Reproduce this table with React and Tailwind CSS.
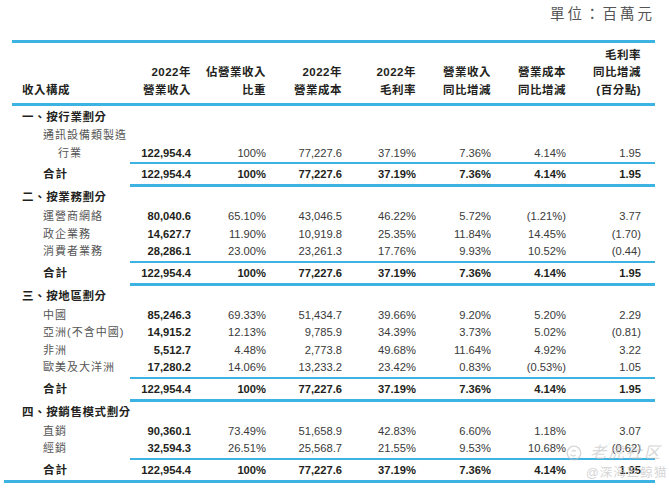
import React from "react";

const COLS = "grid grid-cols-[118px_61px_75px_76px_74px_75px_75px_75px]";

const sections = [
  {
    title: "一、按行業劃分",
    rows: [
      { label: "通訊設備類製造" },
      { label: "行業", indent: true, v: ["122,954.4", "100%", "77,227.6", "37.19%", "7.36%", "4.14%", "1.95"] },
    ],
  },
  {
    title: "二、按業務劃分",
    rows: [
      { label: "運營商網絡", v: ["80,040.6", "65.10%", "43,046.5", "46.22%", "5.72%", "(1.21%)", "3.77"] },
      { label: "政企業務", v: ["14,627.7", "11.90%", "10,919.8", "25.35%", "11.84%", "14.45%", "(1.70)"] },
      { label: "消費者業務", v: ["28,286.1", "23.00%", "23,261.3", "17.76%", "9.93%", "10.52%", "(0.44)"] },
    ],
  },
  {
    title: "三、按地區劃分",
    rows: [
      { label: "中國", v: ["85,246.3", "69.33%", "51,434.7", "39.66%", "9.20%", "5.20%", "2.29"] },
      { label: "亞洲(不含中國)", v: ["14,915.2", "12.13%", "9,785.9", "34.39%", "3.73%", "5.02%", "(0.81)"] },
      { label: "非洲", v: ["5,512.7", "4.48%", "2,773.8", "49.68%", "11.64%", "4.92%", "3.22"] },
      { label: "歐美及大洋洲", v: ["17,280.2", "14.06%", "13,233.2", "23.42%", "0.83%", "(0.53%)", "1.05"] },
    ],
  },
  {
    title: "四、按銷售模式劃分",
    rows: [
      { label: "直銷", v: ["90,360.1", "73.49%", "51,658.9", "42.83%", "6.60%", "1.18%", "3.07"] },
      { label: "經銷", v: ["32,594.3", "26.51%", "25,568.7", "21.55%", "9.53%", "10.68%", "(0.62)"] },
    ],
  },
];

const total = ["122,954.4", "100%", "77,227.6", "37.19%", "7.36%", "4.14%", "1.95"];

const headers = [
  ["2022年", "營業收入"],
  ["佔營業收入", "比重"],
  ["2022年", "營業成本"],
  ["2022年", "毛利率"],
  ["營業收入", "同比增減"],
  ["營業成本", "同比增減"],
  ["毛利率", "同比增減", "(百分點)"],
];

const ItemRow = ({ row }) => (
  <div className={`${COLS} h-[17.5px] leading-[17.5px] text-[11.2px]`}>
    <div className={`${row.indent ? "pl-[46px]" : "pl-[31px]"} text-[11px] tracking-[1px] text-[#555] whitespace-nowrap`}>
      {row.label}
    </div>
    {row.v &&
      row.v.map((val, i) => (
        <div key={i} className={`text-right ${i === 0 ? "font-bold text-[#231f20]" : "text-[#3a3a3a]"}`}>
          {val}
        </div>
      ))}
  </div>
);

const TotalRow = () => (
  <div className={`${COLS} h-[20px] pt-[2px] leading-[17.5px] text-[11.2px] font-bold text-[#231f20]`}>
    <div className="pl-[31px] text-[11.5px] tracking-[1px]">合計</div>
    {total.map((val, i) => (
      <div key={i} className="text-right">{val}</div>
    ))}
  </div>
);

export default function App() {
  return (
    <div className="relative w-[669px] h-[490px] overflow-hidden bg-white pl-[12px] pr-[14px] font-['Liberation_Sans','Noto_Sans_CJK_TC',sans-serif]">
      {/* unit label */}
      <div className="h-[40px] pt-[5px] text-right text-[14.5px] leading-[18px] tracking-[3px] text-[#555]">
        單位：百萬元
      </div>
      <div className="h-[3px] bg-[#3db3e3]" />

      {/* header */}
      <div className={`${COLS} items-end pt-[3.5px] pb-[4px] text-[11.5px] leading-[17.5px] font-bold text-[#231f20]`}>
        <div className="pl-[10px] tracking-[0.5px]">收入構成</div>
        {headers.map((lines, i) => (
          <div key={i} className="flex flex-col items-end tracking-[0.5px]">
            {lines.map((t) => (
              <span key={t}>{t}</span>
            ))}
          </div>
        ))}
      </div>
      <div className="h-[3px] bg-[#3db3e3]" />

      {sections.map((s, si) => (
        <div key={s.title}>
          <div className={`h-[21px] ${si === 0 ? "pt-[3px]" : "pt-[2px]"} pl-[10px] text-[11.5px] leading-[17.5px] font-bold tracking-[0.6px] text-[#231f20]`}>
            {s.title}
          </div>
          {s.rows.map((r) => (
            <ItemRow key={r.label} row={r} />
          ))}
          <div className="ml-[118px] h-[2px] bg-[#3db3e3]" />
          <TotalRow />
          <div className={`${si === sections.length - 1 ? "-ml-[8px]" : "ml-[118px]"} h-[3px] bg-[#3db3e3]`} />
        </div>
      ))}

      {/* watermark */}
      <div className="absolute left-[566px] top-[441px] flex items-center gap-[8px] opacity-60 pointer-events-none">
        <svg width="16" height="16" viewBox="0 0 16 16" fill="none" stroke="#bdbdbd" strokeWidth="1.3">
          <circle cx="8" cy="8" r="6.8" />
          <path d="M4.5 9.5c1.2 1.8 3.8 2 5.2.4M6 6.5c.8-1.2 2.6-1.4 3.6-.3" />
        </svg>
        <span className="text-[16px] italic tracking-[2px] text-[#bdbdbd]">老虎社区</span>
      </div>
      <div className="absolute left-[586px] top-[464px] text-[12.5px] tracking-[1px] text-[#c4c4c4] opacity-70 pointer-events-none">
        @深海巨鲸猫
      </div>
    </div>
  );
}
